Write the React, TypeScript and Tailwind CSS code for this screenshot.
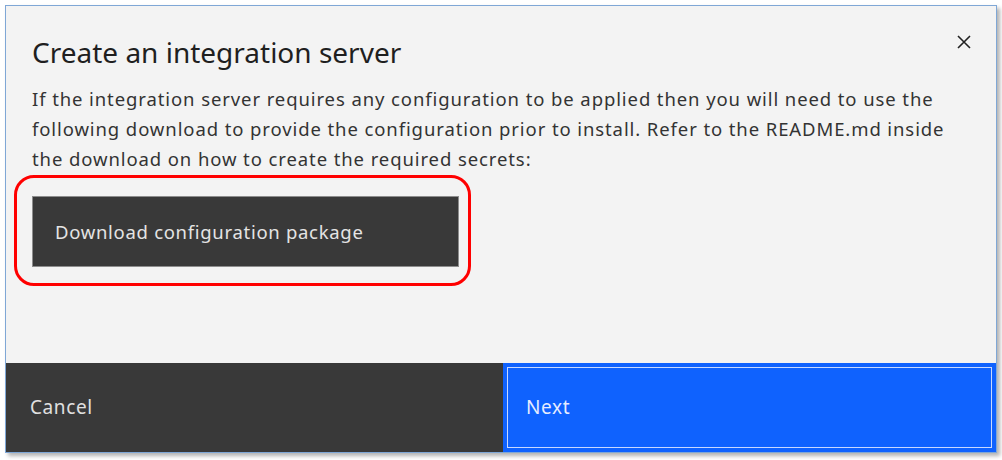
export default function App() {
  return (
    <div className="w-[1002px] h-[460px] bg-white pt-[5px] pl-[5px]" style={{ fontFamily: '"Noto Sans", "Liberation Sans", sans-serif' }}>
      <div className="w-[992px] h-[448px] border border-[#7fa7d6] bg-[#f3f3f3] flex flex-col shadow-[3px_3px_4px_rgba(0,0,0,0.3)]">
        {/* Header */}
        <div className="flex justify-between pl-[26px] pr-[22px] pt-[28px]">
          <h1 className="text-[28px] leading-[36px] text-[#1f1f1f]">Create an integration server</h1>
          <button className="mt-[-2px] w-[20px] h-[20px] flex items-center justify-center text-[#222]">
            <svg width="16" height="16" viewBox="0 0 16 16" fill="none" stroke="currentColor" strokeWidth="1.6">
              <path d="M2 2l12 12M14 2L2 14" />
            </svg>
          </button>
        </div>

        {/* Body */}
        <div className="pl-[26px] pr-[40px] pt-[14px]">
          <p className="w-[925px] text-[18.5px] leading-[30px] tracking-[0.9px] text-[#333]">
            If the integration server requires any configuration to be applied then you will need to use the following download to provide the configuration prior to install. Refer to the README.md inside the download on how to create the required secrets:
          </p>
          <div className="relative mt-[22px] w-[427px]">
            <button className="w-[427px] h-[71px] bg-[#393939] border border-[#8d8d8d] text-left pl-[22px] text-[18.5px] tracking-[0.7px] text-[#e4e4e4]">
              Download configuration package
            </button>
            <div className="absolute -left-[18px] -top-[21px] -right-[12px] -bottom-[19px] border-[3px] border-[#ff0000] rounded-[20px] pointer-events-none" />
          </div>
        </div>

        <div className="flex-1" />

        {/* Footer */}
        <div className="h-[89px] flex">
          <button className="w-[497px] h-full bg-[#393939] text-left pl-[24px] text-[19px] tracking-[0.6px] text-[#e0e0e0]">
            Cancel
          </button>
          <button className="flex-1 h-full bg-[#0f62fe] border-[4px] border-[#0f62fe] outline outline-1 outline-[#c8d8ff] -outline-offset-[5px] text-left pl-[19px] text-[19px] tracking-[0.6px] text-[#e6ecff]">
            Next
          </button>
        </div>
      </div>
    </div>
  );
}
